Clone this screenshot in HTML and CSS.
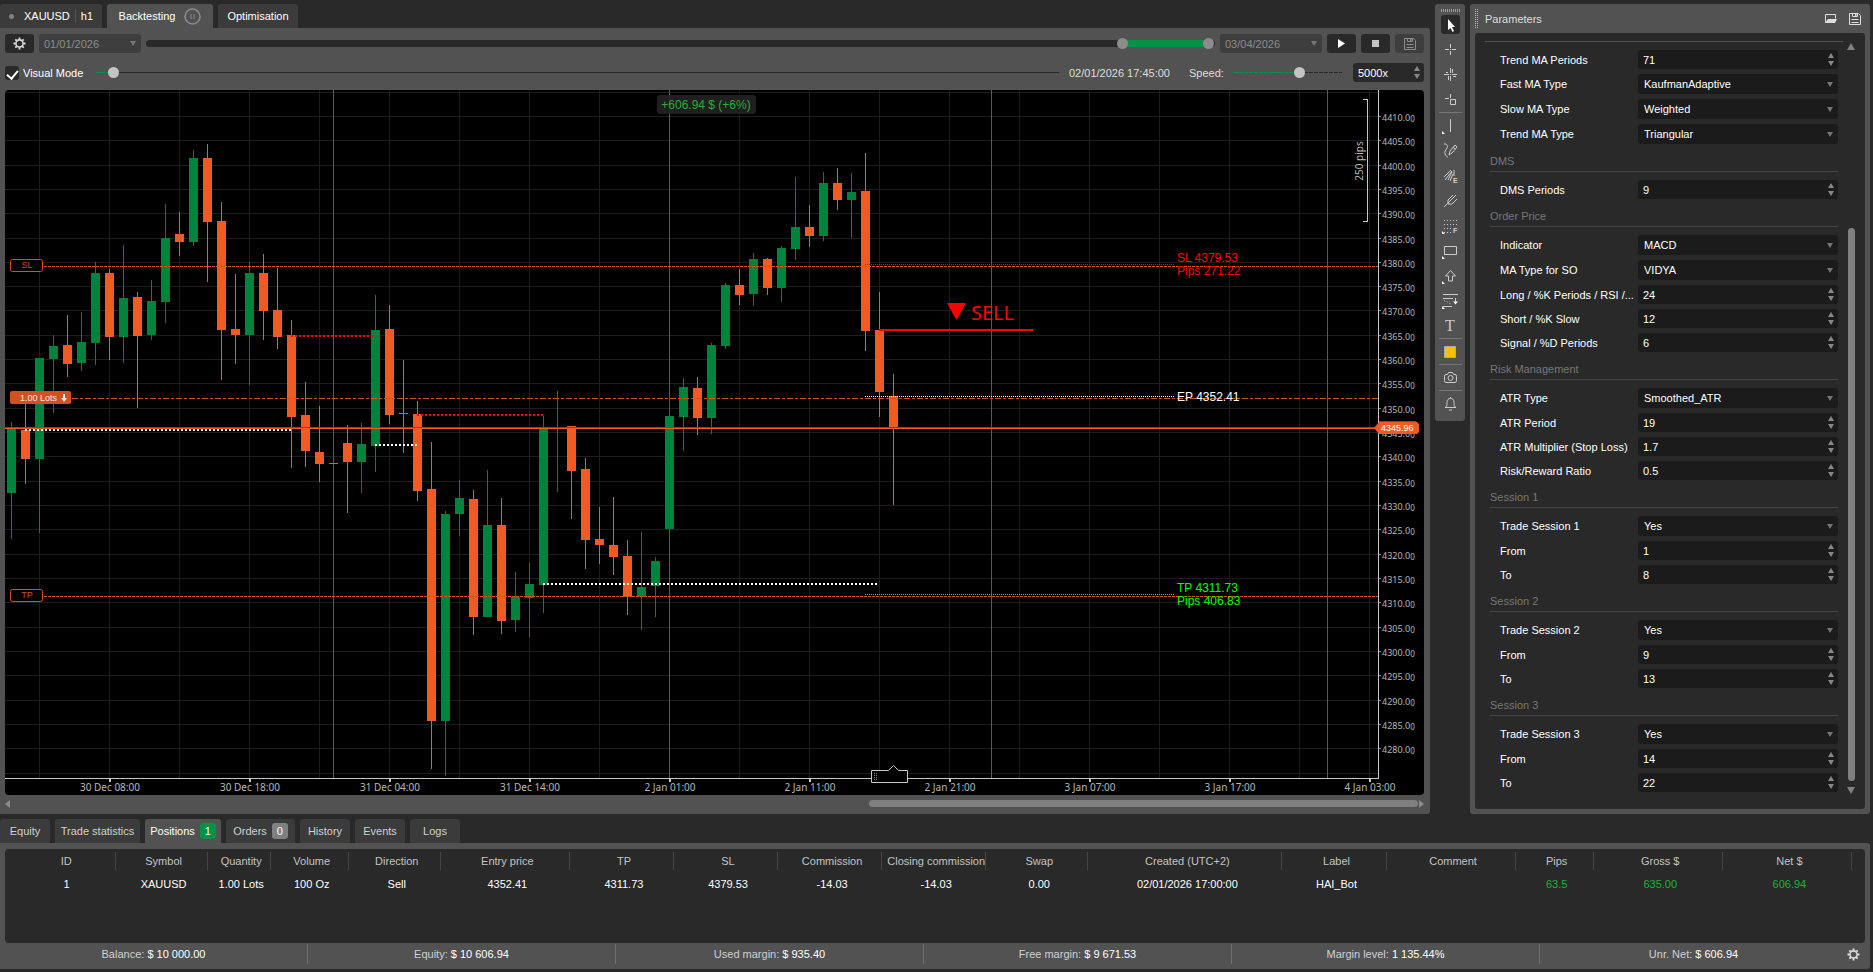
FILE: index.html
```
<!DOCTYPE html>
<html lang="en">
<head>
<meta charset="utf-8">
<title>XAUUSD h1 - Backtesting</title>
<link rel="stylesheet" href="styles.css">
</head>
<body>

<!-- shared icons -->
<svg class="defs" width="0" height="0">
<symbol id="i-gear" viewBox="0 0 13 13"><circle cx="6.5" cy="6.5" r="3.6" fill="none" stroke="currentColor" stroke-width="1.6"/><path d="M6.5 .5v2M6.5 10.5v2M.5 6.5h2M10.5 6.5h2M2.3 2.3l1.4 1.4M9.3 9.3l1.4 1.4M2.3 10.7l1.4-1.4M9.3 3.7l1.4-1.4" stroke="currentColor" stroke-width="1.8"/></symbol>
<symbol id="i-save" viewBox="0 0 12 12"><path d="M.5.5h9l2 2v9h-11zM3.5.5v3h5v-3M2.5 6.5h7M2.5 9.5h7" fill="none" stroke="currentColor"/><path d="M6 1h1.5v2H6z" fill="currentColor"/></symbol>
<symbol id="i-open" viewBox="0 0 12 10"><path d="M.5 8.5v-8h10v4" fill="none" stroke="currentColor"/><path d="M3 5h9l-2 4H0z" fill="currentColor"/></symbol>
</svg>

<div class="workspace">
<main class="left">
<nav class="tabs">
<button class="tab symbol"><i class="dot"></i><span>XAUUSD</span><i class="bar"></i><span>h1</span></button>
<button class="tab backtest active">Backtesting
<svg width="17" height="17" viewBox="0 0 17 17"><circle cx="8.5" cy="8.5" r="7.5" fill="none" stroke="#8c8c8c" stroke-width="1.5"/><path d="M7 6v5M10 6v5" stroke="#777" stroke-width="1.5"/></svg></button>
<button class="tab optim">Optimisation</button>
</nav>

<div class="panel">
<div class="row">
<button class="btn" aria-label="Settings"><svg width="13" height="13" color="#ddd"><use href="#i-gear"/></svg></button>
<div class="pick date"><select aria-label="Start date" disabled><option>01/01/2026</option></select></div>
<div class="range">
<span class="fill"></span>
<input type="range" min="0" max="1000" value="918" aria-label="Range start">
<input type="range" min="0" max="1000" value="999" aria-label="Range end">
</div>
<div class="pick date"><select aria-label="End date" disabled><option>03/04/2026</option></select></div>
<button class="btn" aria-label="Play"><svg width="9" height="9"><path d="M1 0l7 4.5-7 4.5z" fill="#fff"/></svg></button>
<button class="btn" aria-label="Stop"><svg width="7" height="7"><path d="M0 0h7v7H0z" fill="#c4c4c4"/></svg></button>
<button class="btn off" aria-label="Save" disabled><svg width="12" height="12" color="#8c8c8c"><use href="#i-save"/></svg></button>
</div>

<div class="row second">
<label class="visual"><input type="checkbox" checked>Visual Mode</label>
<input class="line progress" type="range" min="0" max="1000" value="13" aria-label="Progress">
<span class="clock">02/01/2026 17:45:00</span>
<label class="speed" for="speed">Speed:</label>
<input class="line dashed" id="speed" type="range" min="0" max="100" value="62">
<div class="spin mult"><input type="text" value="5000x" aria-label="Speed multiplier"></div>
</div>

<svg id="chart" viewBox="5 90 1419 705"></svg>

<div class="hscroll"><i class="arr l"></i><i class="thumb"></i><i class="arr r"></i></div>
</div>
</main>

<aside class="tools">
<i class="grip"></i>
<button class="on" aria-label="Pointer"><svg><path class="solid" d="M7 4v11l2.500-2 2 4 1.500-1-2-4h3z"/></svg></button>
<button aria-label="Crosshair"><svg><path d="M4 9.500h4M11 9.500h4M9.500 4v4M9.500 11v4M9 9.500h1"/></svg></button>
<button aria-label="Sync crosshair"><svg><path d="M3 9.500h5M11 9.500h5M9.500 3v5M9.500 11v5M9 9.500h1M5 7.500h2M12 11.500h3M7.500 11v4M11.500 4v4"/></svg></button>
<button aria-label="Market snapshot"><svg><path d="M4 8.500h4M9.500 4v4M9.500 9.500h5v5h-5z"/></svg></button>
<hr>
<button aria-label="Line"><svg><path d="M9.500 3v13"/><path class="fly" d="M1 15l3 3H1z"/></svg></button>
<button aria-label="Pencil"><svg><path d="M3 3c3-.5 4 2 3 4s-3 4-2 6 2 3 3 3M8 14l1-4 5-6 2 2-5 6zM12 6l2 2"/></svg></button>
<button aria-label="Equidistant"><svg><path d="M3 11l7-7M4 14l7-9M7 14l4-8M9 15l3-7M13 10V4"/><text x="12" y="17">E</text></svg></button>
<button aria-label="Pitchfork"><svg><path d="M3 16l10-10M7 9l5-5M7 9v4h4M11 13l5-5M13 6l2-2"/></svg></button>
<button aria-label="Fibonacci"><svg><path d="M3 4.500h14M3 8.500h14M3 12.500h7M3 16.500h7" stroke-dasharray="1 2"/><text x="12" y="17">F</text><path class="fly" d="M1 15l3 3H1z"/></svg></button>
<button aria-label="Rectangle"><svg><path d="M3.500 5.500h12v8h-12z"/><path class="fly" d="M1 15l3 3H1z"/></svg></button>
<button aria-label="Arrow"><svg><path d="M9.500 4.500l5 5.500h-3v5h-4v-5h-3z"/><path class="fly" d="M1 15l3 3H1z"/></svg></button>
<button aria-label="Risk reward"><svg><path d="M2 3.500h15M2 7.500h10M2 15.500h9M14.500 7v6"/><path d="M3 9.500l8 4" stroke-dasharray="1 2"/><path class="solid" d="M12 10.500h5l-2.500 3z"/><path class="fly" d="M1 15l3 3H1z"/></svg></button>
<button aria-label="Text"><svg><text class="big" x="9" y="15">T</text></svg></button>
<hr>
<button aria-label="Colour"><svg><path class="swatch" d="M3.500 4.500h11v11h-11z"/></svg></button>
<hr>
<button aria-label="Screenshot"><svg><path d="M5 6.500h1.500l1-2h4l1 2H14q1.500 0 1.500 2v4q0 2-1.500 2H5q-1.500 0-1.500-2v-4q0-2 1.500-2z"/><circle cx="9.5" cy="10" r="2.500"/></svg></button>
<hr>
<button aria-label="Alerts"><svg><path d="M4 13.500h11c-2-1-2-2-2-5 0-3-1.500-4-3.500-4s-3.500 1-3.500 4c0 3 0 4-2 5zM9.500 3v1M8 16h3"/></svg></button>
</aside>

<aside class="params">
<header><i class="grip"></i><span>Parameters</span>
<button aria-label="Open"><svg width="12" height="10"><use href="#i-open"/></svg></button>
<button aria-label="Save parameters"><svg width="12" height="12"><use href="#i-save"/></svg></button></header>
<div class="sheet">
<form>
<section>
<label for="p1">Trend MA Periods</label><div class="spin"><input type="number" id="p1" value="71"></div>
<label for="p2">Fast MA Type</label><div class="pick"><select id="p2"><option>KaufmanAdaptive</option></select></div>
<label for="p3">Slow MA Type</label><div class="pick"><select id="p3"><option>Weighted</option></select></div>
<label for="p4">Trend MA Type</label><div class="pick"><select id="p4"><option>Triangular</option></select></div>
</section>
<h3>DMS</h3>
<section>
<label for="p5">DMS Periods</label><div class="spin"><input type="number" id="p5" value="9"></div>
</section>
<h3>Order Price</h3>
<section>
<label for="p6">Indicator</label><div class="pick"><select id="p6"><option>MACD</option></select></div>
<label for="p7">MA Type for SO</label><div class="pick"><select id="p7"><option>VIDYA</option></select></div>
<label for="p8">Long / %K Periods / RSI /...</label><div class="spin"><input type="number" id="p8" value="24"></div>
<label for="p9">Short / %K Slow</label><div class="spin"><input type="number" id="p9" value="12"></div>
<label for="p10">Signal / %D Periods</label><div class="spin"><input type="number" id="p10" value="6"></div>
</section>
<h3>Risk Management</h3>
<section>
<label for="p11">ATR Type</label><div class="pick"><select id="p11"><option>Smoothed_ATR</option></select></div>
<label for="p12">ATR Period</label><div class="spin"><input type="number" id="p12" value="19"></div>
<label for="p13">ATR Multiplier (Stop Loss)</label><div class="spin"><input type="number" id="p13" step="0.1" value="1.7"></div>
<label for="p14">Risk/Reward Ratio</label><div class="spin"><input type="number" id="p14" step="0.1" value="0.5"></div>
</section>
<h3>Session 1</h3>
<section>
<label for="p15">Trade Session 1</label><div class="pick"><select id="p15"><option>Yes</option></select></div>
<label for="p16">From</label><div class="spin"><input type="number" id="p16" value="1"></div>
<label for="p17">To</label><div class="spin"><input type="number" id="p17" value="8"></div>
</section>
<h3>Session 2</h3>
<section>
<label for="p18">Trade Session 2</label><div class="pick"><select id="p18"><option>Yes</option></select></div>
<label for="p19">From</label><div class="spin"><input type="number" id="p19" value="9"></div>
<label for="p20">To</label><div class="spin"><input type="number" id="p20" value="13"></div>
</section>
<h3>Session 3</h3>
<section>
<label for="p21">Trade Session 3</label><div class="pick"><select id="p21"><option>Yes</option></select></div>
<label for="p22">From</label><div class="spin"><input type="number" id="p22" value="14"></div>
<label for="p23">To</label><div class="spin"><input type="number" id="p23" value="22"></div>
</section>
</form>
<div class="vscroll"><i class="arr u"></i><i class="thumb"></i><i class="arr d"></i></div>
</div>
</aside>
</div>

<div class="bottom">
<nav class="tabs">
<button class="tab t-eq">Equity</button>
<button class="tab t-stat">Trade statistics</button>
<button class="tab t-pos active">Positions<b class="green">1</b></button>
<button class="tab t-ord">Orders<b>0</b></button>
<button class="tab t-eq">History</button>
<button class="tab t-eq">Events</button>
<button class="tab t-eq">Logs</button>
</nav>
<div class="panel">
<div class="list">
<table>
<colgroup><col class="w102"><col class="w92"><col class="w63"><col class="w78"><col class="w92"><col class="w129"><col class="w104"><col class="w104"><col class="w104"><col class="w104"><col class="w102"><col class="w194"><col class="w104"><col class="w129"><col class="w78"><col class="w129"><col class="w129"></colgroup>
<thead>
<tr><th>ID</th><th>Symbol</th><th>Quantity</th><th>Volume</th><th>Direction</th><th>Entry price</th><th>TP</th><th>SL</th><th>Commission</th><th>Closing commission</th><th>Swap</th><th>Created (UTC+2)</th><th>Label</th><th>Comment</th><th>Pips</th><th>Gross $</th><th>Net $</th></tr>
</thead>
<tbody>
<tr><td>1</td><td>XAUUSD</td><td>1.00 Lots</td><td>100 Oz</td><td>Sell</td><td>4352.41</td><td>4311.73</td><td>4379.53</td><td>-14.03</td><td>-14.03</td><td>0.00</td><td>02/01/2026 17:00:00</td><td>HAI_Bot</td><td></td><td class="up">63.5</td><td class="up">635.00</td><td class="up">606.94</td></tr>
</tbody>
</table>
</div>
<footer>
<div>Balance: <b>$ 10 000.00</b></div>
<div>Equity: <b>$ 10 606.94</b></div>
<div>Used margin: <b>$ 935.40</b></div>
<div>Free margin: <b>$ 9 671.53</b></div>
<div>Margin level: <b>1 135.44%</b></div>
<div>Unr. Net: <b>$ 606.94</b></div>
<button aria-label="Account settings"><svg width="13" height="13" color="#ddd"><use href="#i-gear"/></svg></button>
</footer>
</div>
</div>

<script src="chart.js"></script>
</body>
</html>
```
FILE: styles.css
```
*{
box-sizing: border-box;
}
body{
margin: 0;
padding: 4px 3px 3px 0;
background-color: #292929;
color: #dedede;
font-family: "Liberation Sans", Arial, sans-serif;
font-size: 11px;
line-height: 14px;
}
button, input, select{
font: inherit;
color: inherit;
border: none;
margin: 0;
padding: 0;
background: none;
}
.defs{
position: absolute;
}
svg{
display: block;
}

/* page grid */
.workspace{
display: grid;
grid-template-columns: minmax(0, 1fr) 30px 400px;
gap: 5px;
align-items: start;
}
.bottom{
margin-top: 5px;
}
.panel{
background-color: #525252;
border-radius: 0 3px 3px 0;
}
.left .panel{
padding: 6px 6px 7px 5px;
}

/* tabs */
.tabs{
display: flex;
gap: 5px;
}
.tab{
display: flex;
align-items: center;
justify-content: center;
height: 24px;
border-radius: 3px 3px 0 0;
background-color: #3b3b3b;
color: #fff;
white-space: nowrap;
}
.tab.active{
background-color: #525252;
}
.symbol{
width: 102px;
gap: 5px;
}
.backtest{
width: 106px;
gap: 9px;
}
.optim{
width: 80px;
}
.dot{
width: 5px;
height: 5px;
border-radius: 50%;
background-color: #808080;
margin-right: 5px;
}
.bar{
width: 1px;
height: 14px;
background-color: #525252;
}
.bottom .tab{
color: #d0d0d0;
}
.bottom .tab.active{
color: #fff;
}
.t-eq{ width: 50px; }
.t-stat{ width: 85px; }
.t-pos{ width: 76px; }
.t-ord{ width: 69px; }
.tab b{
width: 16px;
margin-left: 5px;
border-radius: 3px;
background-color: #808080;
color: #fff;
font-weight: normal;
line-height: 16px;
}
.tab b.green{
background-color: #009245;
}

/* backtest controls */
.row{
display: flex;
gap: 5px;
height: 19px;
}
.second{
gap: 0;
align-items: center;
margin: 10px 0 8px;
}
.btn{
display: flex;
align-items: center;
justify-content: center;
width: 29px;
height: 19px;
border-radius: 3px;
background-color: #292929;
}
.btn.off{
background-color: #3e3e3e;
}
.pick, .spin{
position: relative;
border-radius: 3px;
background-color: #1b1b1b;
color: #fff;
}
.pick select, .spin input{
display: block;
width: 100%;
height: 100%;
appearance: none;
padding-left: 6px;
opacity: 1;
outline: none;
}
.spin input{
padding-left: 5px;
appearance: textfield;
}
.spin input::-webkit-inner-spin-button{
display: none;
}
.pick{
height: 20px;
}
.spin{
height: 19px;
}
.pick::after, .spin::before, .spin::after{
content: "";
position: absolute;
right: 4px;
border: 3px solid transparent;
}
.pick::after{
top: 8px;
right: 5px;
border-width: 5px 3px 0;
border-top-color: #777;
}
.spin::before{
top: 3px;
border-width: 0 3px 5px;
border-bottom-color: #888;
}
.spin::after{
bottom: 3px;
border-width: 5px 3px 0;
border-top-color: #888;
}
.date{
width: 102px;
height: 19px;
background-color: #3e3e3e;
color: #8c8c8c;
}
.date select{
padding-left: 5px;
}
.date::after{
top: 7px;
}
.range{
position: relative;
flex: 1;
height: 7px;
margin-top: 6px;
border-radius: 4px;
background-color: #292929;
}
.range .fill{
position: absolute;
left: 91%;
right: 6px;
height: 7px;
background-color: #009245;
}
.range input{
position: absolute;
left: 0;
top: -2px;
width: 100%;
height: 11px;
appearance: none;
pointer-events: none;
}
.range input::-webkit-slider-thumb{
appearance: none;
width: 11px;
height: 11px;
border-radius: 50%;
background-color: #8c8c8c;
pointer-events: auto;
}
.visual{
display: flex;
align-items: center;
gap: 4px;
width: 91px;
color: #fff;
}
.visual input{
display: flex;
align-items: flex-start;
justify-content: center;
appearance: none;
width: 14px;
height: 14px;
padding-top: 2px;
border-radius: 3px;
background-color: #292929;
}
.visual input:checked::before{
content: "";
width: 5px;
height: 9px;
border: solid #fff;
border-width: 0 2px 2px 0;
transform: rotate(40deg);
}
.line{
appearance: none;
height: 11px;
background: linear-gradient(90deg, #009245 2%, #292929 2%) center / 100% 1px no-repeat;
}
.line::-webkit-slider-thumb{
appearance: none;
width: 11px;
height: 11px;
border-radius: 50%;
background-color: #c4c4c4;
}
.progress{
flex: 1;
min-width: 0;
}
.dashed{
width: 108px;
background: repeating-linear-gradient(90deg, transparent 0 4px, #525252 4px 5px), linear-gradient(90deg, #009245 60%, #292929 60%) center / 100% 1px no-repeat;
}
.clock{
width: 120px;
margin-left: 10px;
white-space: nowrap;
}
.speed{
width: 45px;
}
.mult{
width: 71px;
margin-left: 11px;
background-color: #292929;
}
#chart{
width: 100%;
height: auto;
border-radius: 4px;
background-color: #000;
}

/* scroll bars */
.hscroll{
display: flex;
align-items: center;
height: 7px;
margin-top: 5px;
}
.hscroll .thumb{
width: 549px;
height: 7px;
margin-left: auto;
margin-right: 1px;
border-radius: 4px;
background-color: #808080;
}
.arr{
border: 4px solid transparent;
}
.arr.l{
border-width: 4px 5px 4px 0;
border-right-color: #8c8c8c;
}
.arr.r{
border-width: 4px 0 4px 5px;
border-left-color: #8c8c8c;
}
.arr.u{
border-width: 0 4px 7px;
border-bottom-color: #808080;
}
.arr.d{
border-width: 7px 4px 0;
border-top-color: #808080;
}

/* drawing tools */
.tools{
display: flex;
flex-direction: column;
align-items: center;
padding: 5px 0;
border-radius: 3px;
background-color: #525252;
}
.tools .grip{
width: 19px;
height: 3px;
background: repeating-linear-gradient(90deg, #999 0 1px, transparent 1px 2px);
}
.tools button{
height: 19px;
width: 19px;
margin: 3px 0;
border-radius: 3px;
}
.tools button.on{
background-color: #292929;
}
.tools svg{
width: 19px;
height: 19px;
fill: none;
stroke: #ccc;
}
.tools .fly, .tools .solid{
fill: #fff;
stroke: none;
}
.tools .swatch{
fill: #ffc000;
stroke: #aaa;
}
.tools text{
font-size: 7px;
font-weight: bold;
fill: #ccc;
stroke: none;
}
.tools .big{
font-family: "Liberation Serif", serif;
font-size: 16px;
font-weight: normal;
text-anchor: middle;
}
.tools hr{
width: 23px;
height: 1px;
margin: 0;
border: none;
background-color: #777;
}

/* parameters */
.params{
padding: 0 5px 5px;
border-radius: 3px;
background-color: #525252;
}
.params header{
display: flex;
align-items: center;
height: 29px;
padding-right: 4px;
}
.params header .grip{
width: 3px;
height: 19px;
margin-right: 7px;
border: dotted #bbb;
border-width: 0 1px;
}
.params header span{
flex: 1;
}
.params header button{
margin-left: 12px;
}
.sheet{
display: flex;
justify-content: space-between;
padding: 8px 10px 15px;
border-radius: 3px;
background-color: #292929;
}
.params form{
width: 358px;
padding: 8px 5px 2px;
border-top: 1px solid #525252;
color: #fff;
}
.params section{
display: grid;
grid-template-columns: 138px 200px;
row-gap: 5px;
align-items: center;
padding-left: 10px;
}
.params section label{
white-space: nowrap;
}
.params h3{
margin: 0 0 8px;
padding: 10px 0 3px;
border-bottom: 1px solid #444;
color: #777;
font-size: 11px;
font-weight: normal;
}
.vscroll{
display: flex;
flex-direction: column;
align-items: center;
width: 8px;
padding-top: 2px;
}
.vscroll .thumb{
flex: 1;
width: 7px;
margin: 178px 0 6px;
border-radius: 4px;
background-color: #808080;
}

/* positions */
.bottom .panel{
padding: 6px 5px 0;
}
.list{
min-height: 94px;
padding: 3px 13px 0 8px;
border-radius: 4px;
background-color: #292929;
}
table{
width: 100%;
table-layout: fixed;
border-collapse: collapse;
text-align: center;
}
th, td{
padding: 0 0 0 5px;
white-space: nowrap;
}
th{
height: 18px;
border-right: 1px solid #444;
color: #c4c4c4;
font-weight: normal;
}
td{
height: 28px;
color: #fff;
}
td.up{
color: #22b033;
}
.w63{ width: 63px; }
.w78{ width: 78px; }
.w92{ width: 92px; }
.w102{ width: 102px; }
.w104{ width: 104px; }
.w129{ width: 129px; }
.w194{ width: 194px; }
footer{
display: flex;
align-items: center;
height: 26px;
margin-left: -5px;
padding: 0 5px 4px 0;
color: #d0d0d0;
}
footer div{
flex: 1;
line-height: 20px;
border-right: 1px solid #707070;
text-align: center;
}
footer div:nth-child(6){
border: none;
}
footer b{
color: #fff;
font-weight: normal;
}

/* chart */
.axis{
font: 10px "Noto Sans", sans-serif;
fill: #b8b8b8;
}
.price{
font: 9px "Noto Sans", sans-serif;
fill: #b8b8b8;
}
.sub{
font-size: 8px;
}
.note{
font-size: 12px;
}
.tag{
font-size: 9px;
}
.sell{
font: 20px "Noto Sans", sans-serif;
}
```
FILE: chart.js
```
const chart = document.getElementById('chart');
const GREEN = '#00843d', ORANGE = '#f15a22', LINE = '#d4501f';

// direction, high, body top, body bottom, low
const candles = [
['u',422,428,493,539],['d',403,430,459,484],['u',358,358,459,533],['u',335,346,359,413],
['d',315,345,364,377],['u',312,342,363,371],['u',262,273,343,365],['d',269,273,337,360],
['u',245,298,337,363],['d',292,297,336,408],['u',280,301,335,340],['u',204,238,302,323],
['d',212,234,242,256],['u',150,158,242,246],['d',144,158,222,282],['d',202,221,330,380],
['d',274,329,335,364],['u',262,273,335,385],['d',254,273,311,340],['d',268,310,337,349],
['d',320,335,417,468],['d',382,415,451,467],['d',406,452,464,482],['d',463,463,464,464],
['d',425,443,462,513],['u',423,444,462,493],['u',295,330,446,472],['d',305,329,415,424],
['d',360,413,414,453],['d',401,414,491,501],['d',442,489,721,769],['u',511,514,721,776],
['u',480,498,514,536],['d',490,499,617,635],['u',470,525,617,617],['d',498,525,621,634],
['u',572,597,620,632],['u',563,584,598,637],['u',416,428,585,613],['u',391,427,428,492],
['d',426,426,471,519],['d',458,469,540,569],['d',507,539,545,564],['d',497,545,557,575],
['d',540,556,597,615],['u',532,587,597,630],['u',557,561,586,617],['u',385,416,529,534],
['u',378,387,417,451],['d',377,388,418,435],['u',343,345,418,434],['u',283,285,346,349],
['d',269,285,295,305],['u',253,259,294,306],['d',258,259,288,295],['u',246,248,288,302],
['u',177,227,249,260],['d',205,227,236,247],['u',172,183,236,241],['d',168,183,200,210],
['u',173,192,200,238],['d',153,191,331,351],['d',292,330,392,417],['d',374,396,427,505]
];
const times = ['30 Dec 08:00', '30 Dec 18:00', '31 Dec 04:00', '31 Dec 14:00', '2 Jan 01:00',
'2 Jan 11:00', '2 Jan 21:00', '3 Jan 07:00', '3 Jan 17:00', '4 Jan 03:00'];

let out = '';
function rect(x, y, w, h, fill) {
out += `<rect x="${x}" y="${y}" width="${w}" height="${h}" fill="${fill}" shape-rendering="crispEdges"/>`;
}
function line(x1, x2, y, color, width, dash) {
out += `<line x1="${x1}" x2="${x2}" y1="${y}" y2="${y}" stroke="${color}" stroke-width="${width}" stroke-dasharray="${dash}" shape-rendering="crispEdges"/>`;
}
function text(x, y, str, cls, fill, anchor = 'start') {
out += `<text x="${x}" y="${y}" class="${cls}" fill="${fill}" text-anchor="${anchor}">${str}</text>`;
}
function priceY(price) {
return Math.floor(116.4 + (4410 - price) * 4.864);
}

// grid
for (let p = 4415; p >= 4275; p -= 5) rect(5, priceY(p), 1373, 1, '#1d1d20');
for (let x = 39; x < 1378; x += 70) rect(x, 90, 1, 688, '#1d1d20');
[333, 669, 991, 1327].forEach(x => rect(x, 90, 1, 688, '#5a5a5a'));

candles.forEach((c, i) => {
const color = c[0] === 'u' ? GREEN : ORANGE;
rect(11 + 14 * i, c[1], 1, c[4] - c[1], color);
rect(7 + 14 * i, c[2], 9, c[3] - c[2], color);
});

// old stops and targets
line(291, 375, 336, '#f00', 2, '2 2');
line(417, 543, 415, '#f00', 2, '2 2');
line(25, 291, 430, '#fff', 2, '2 2');
line(375, 417, 445, '#fff', 2, '2 2');
line(543, 879, 584, '#fff', 2, '2 2');

// open position
line(44, 1380, 266.5, LINE, 1, '3 1');
line(72, 1378, 398.5, LINE, 1, '6 2 3 2');
line(44, 1380, 596.5, LINE, 1, '3 1');
line(865, 1174, 264.5, '#f00', 1, '1 1');
line(865, 1174, 396.5, '#fff', 1, '1 1');
line(865, 1174, 594.5, '#0f0', 1, '1 1');
rect(5, 427, 1373, 1, GREEN);
rect(5, 428, 1373, 1, ORANGE);
rect(879, 329, 154, 2, '#f00');
out += '<path d="M947 303h19l-9.5 17z" fill="#f00"/>';
text(971, 320, 'SELL', 'sell', '#f00');
text(1177, 262, 'SL 4379.53', 'note', '#f00');
text(1177, 275, 'Pips 271.22', 'note', '#f00');
text(1177, 401, 'EP 4352.41', 'note', '#fff');
text(1177, 592, 'TP 4311.73', 'note', '#0f0');
text(1177, 605, 'Pips 406.83', 'note', '#0f0');

// line labels
[['SL', 259], ['TP', 589]].forEach(l => {
out += `<rect x="10.5" y="${l[1] + 0.5}" width="32" height="12" rx="2" fill="#000" stroke="${LINE}"/>`;
text(27, l[1] + 9, l[0], 'tag', LINE, 'middle');
});
out += `<rect x="10" y="391" width="61" height="13" rx="2" fill="${LINE}"/>`;
text(20, 401, '1.00 Lots', 'tag', '#eee');
out += '<path d="M63 394h2v4h2l-3 4-3-4h2z" fill="#eee"/>';

// net profit
out += '<rect x="657" y="95" width="99" height="19" rx="3" fill="#222" fill-opacity=".9"/>';
text(706, 109, '+606.94 $ (+6%)', 'note', '#22b033', 'middle');

// pips ruler
out += '<path d="M1363 99.5h4.5v122h-4.5" fill="none" stroke="#c8c8c8" shape-rendering="crispEdges"/>';
out += '<text class="axis" text-anchor="middle" transform="translate(1363 161) rotate(-90)">250 pips</text>';

// axes
rect(1378, 90, 1, 689, '#c8c8c8');
rect(5, 778, 1374, 1, '#c8c8c8');
for (let p = 4410; p >= 4280; p -= 5) {
const y = priceY(p);
rect(1379, y, 2, 1, '#888');
out += `<text class="price" x="1382" y="${y + 5}">${p}.0<tspan class="sub" dy="1">0</tspan></text>`;
}
times.forEach((t, i) => {
rect(109 + 140 * i, 779, 2, 3, '#c8c8c8');
text(110 + 140 * i, 791, t, 'axis', '', 'middle');
});
out += '<path d="M1374 428l5-6h38l2 2v8l-2 2h-38z" fill="#f15a22"/>';
rect(1379, 421, 37, 1, GREEN);
text(1381, 431, '4345.96', 'tag', '#fff');

// last bar marker
out += '<path d="M871.5 770.5h17l5-5 5 5h9v12h-36z" fill="#000" stroke="#c8c8c8"/>';
out += '<path d="M874.5 773v8M876.5 773v8" stroke="#888" stroke-dasharray="1 1"/>';

chart.innerHTML = out;
```
